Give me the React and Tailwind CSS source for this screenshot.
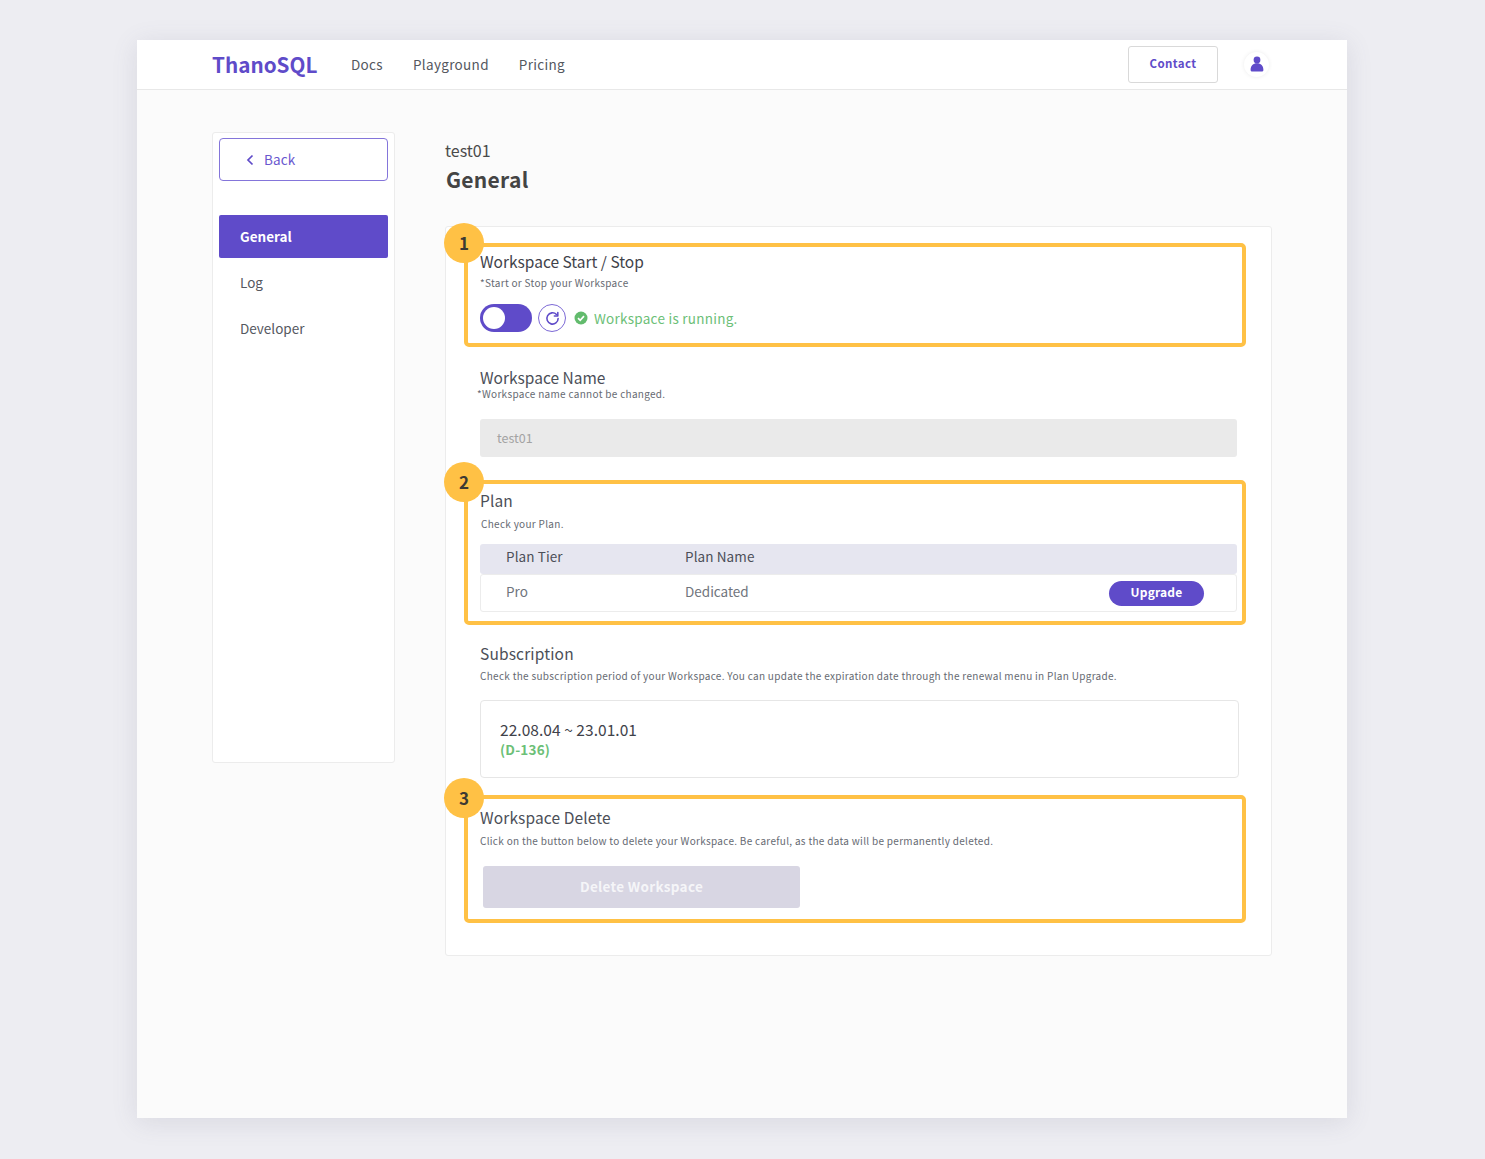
import React from "react";

const Badge = ({ n, top }) => (
  <div className={`absolute left-[-24px] ${top} w-[40px] h-[40px] rounded-full bg-[#ffc145] pb-[2px] flex items-center justify-center text-[17px] font-bold text-[#3d3a33] leading-none`}>
    {n}
  </div>
);

export default function App() {
  return (
    <div className="w-[1485px] h-[1159px] bg-[#ededf2] pt-[40px] pl-[137px] text-[#4c4f58] overflow-hidden" style={{ fontFamily: '"Noto Sans CJK KR", "Noto Sans", sans-serif' }}>
      <div className="w-[1210px] h-[1078px] bg-[#fbfbfb] shadow-[0_4px_24px_rgba(90,90,120,0.14)] flex flex-col">
        <header className="h-[50px] shrink-0 bg-white border-b border-[#e8e8e8] flex items-center pl-[75px] pr-[78px]">
          <div className="text-[20.7px] font-bold text-[#5f4bc9] leading-none w-[139px]">ThanoSQL</div>
          <nav className="flex gap-[30px] text-[13.5px] text-[#55585f] tracking-[0.32px] mb-[1px]">
            <span>Docs</span><span>Playground</span><span>Pricing</span>
          </nav>
          <div className="ml-auto flex items-center gap-[26px]">
            <button className="w-[90px] h-[37px] border border-[#d9d9d9] rounded-[3px] bg-white pb-[1px] text-[11.5px] font-bold text-[#5f4bc9] tracking-[0.4px]">Contact</button>
            <div className="w-[25px] h-[25px] rounded-full bg-white shadow-[0_0_4px_rgba(0,0,0,0.08)] flex items-center justify-center">
              <svg width="14" height="17" viewBox="0 0 14 17" fill="#5f4bc9"><circle cx="7" cy="4" r="3.4" /><path d="M.6 14c0-4.500 2.600-6.800 6.400-6.800s6.400 2.300 6.400 6.800c0 1-.8 1.500-1.800 1.500H2.400c-1 0-1.800-.5-1.800-1.500z" /></svg>
            </div>
          </div>
        </header>
        <div className="flex pl-[75px] pt-[42px]">
          <aside className="w-[183px] h-[631px] bg-white border border-[#ececec] rounded-[3px] px-[6px] pt-[5px] shrink-0">
            <button className="w-[169px] h-[43px] border border-[#8475da] rounded-[4px] bg-white flex items-center pl-[25px] text-[13.5px] text-[#6a58cf] tracking-[0.1px]">
              <svg width="10" height="12" viewBox="0 0 10 12" fill="none" stroke="#5f4bc9" strokeWidth="1.7" className="mr-[9px]"><path d="M7.500 1.500 3 6l4.500 4.500" /></svg>
              Back
            </button>
            <div className="mt-[34px] h-[43px] w-[169px] rounded-[2px] bg-[#5f4bc9] text-white font-bold text-[13.5px] flex items-center pl-[21px]">General</div>
            <div className="h-[46px] w-[169px] text-[13.5px] flex items-center pl-[21px] text-[#55585f] mt-[1px]">Log</div>
            <div className="h-[46px] w-[169px] text-[13.5px] flex items-center pl-[21px] text-[#55585f]">Developer</div>
          </aside>
          <main className="ml-[50px] w-[827px]">
            <div className="text-[16px] leading-[20px] mt-[8px] text-[#4a4a4a]">test01</div>
            <div className="text-[21px] leading-[28px] mt-[5px] ml-[1px] font-bold text-[#444444] tracking-[0.3px]">General</div>
            <div className="mt-[33px] h-[730px] bg-white border border-[#ececec] rounded-[3px] pt-[16px] pl-[18px] pr-[25px]">
              <section className="relative h-[104px] border-[4px] border-[#ffc145] rounded-[5px] pl-[12px] pt-[3px]">
                <Badge n="1" top="top-[-24px]" />
                <h2 className="text-[15.5px] leading-[22px] text-[#3f424a]">Workspace Start / Stop</h2>
                <p className="text-[10px] leading-[14px] mt-[4px] text-[#666a72] tracking-[0.3px]">*Start or Stop your Workspace</p>
                <div className="flex items-center mt-[14px]">
                  <div className="w-[52px] h-[28px] rounded-full bg-[#5f4bc9] flex items-center pl-[3px]"><div className="w-[22px] h-[22px] rounded-full bg-white" /></div>
                  <div className="ml-[6px] w-[28px] h-[28px] rounded-full border border-[#7c69d6] flex items-center justify-center">
                    <svg width="15" height="15" viewBox="0 0 24 24" fill="none" stroke="#5f4bc9" strokeWidth="2.500" strokeLinecap="round"><path d="M21 12a9 9 0 1 1-2.600-6.400" /><path d="M20.500 2.500v5.500H15" strokeLinejoin="round" /></svg>
                  </div>
                  <svg width="14" height="14" viewBox="0 0 14 14" className="ml-[8px]"><circle cx="7" cy="7" r="6.500" fill="#62bb6d" /><path d="M4 7.200 6.200 9.300 10 5.200" fill="none" stroke="#fff" strokeWidth="1.700" /></svg>
                  <span className="ml-[6px] text-[13.5px] text-[#6cc077] tracking-[0.26px]">Workspace is running.</span>
                </div>
              </section>
              <section className="pl-[16px] pt-[19px] h-[133px]">
                <h2 className="text-[15.5px] leading-[22px]">Workspace Name</h2>
                <p className="text-[10px] leading-[14px] ml-[-3px] text-[#666a72] tracking-[0.3px] mt-[-1px]">*Workspace name cannot be changed.</p>
                <div className="mt-[18px] w-[757px] h-[38px] bg-[#eaeaea] rounded-[3px] pl-[17px] flex items-center text-[12.5px] text-[#a3a3a3]">test01</div>
              </section>
              <section className="relative h-[145px] border-[4px] border-[#ffc145] rounded-[5px] pl-[12px] pt-[5px]">
                <Badge n="2" top="top-[-22px]" />
                <h2 className="text-[15.5px] leading-[22px] tracking-[0.1px]">Plan</h2>
                <p className="text-[10px] leading-[14px] mt-[6px] ml-[1px] text-[#666a72] tracking-[0.3px]">Check your Plan.</p>
                <div className="mt-[13px] w-[757px]">
                  <div className="h-[30px] bg-[#e6e6f0] rounded-[3px] flex items-center pb-[5px] pl-[26px] text-[13.5px] tracking-[0.1px]">
                    <span className="w-[179px]">Plan Tier</span><span>Plan Name</span>
                  </div>
                  <div className="h-[38px] bg-white border border-[#ececec] rounded-[3px] flex items-center pl-[25px] pr-[32px] text-[13.5px] text-[#70747c]">
                    <span className="w-[179px] mb-[4px]">Pro</span><span className="mb-[4px]">Dedicated</span>
                    <button className="ml-auto w-[95px] h-[25px] rounded-full bg-[#5f4bc9] pb-[2px] text-white text-[12px] font-bold tracking-[0.2px]">Upgrade</button>
                  </div>
                </div>
              </section>
              <section className="pl-[16px] pt-[17px] h-[170px]">
                <h2 className="text-[15.5px] leading-[22px] tracking-[0.15px]">Subscription</h2>
                <p className="text-[10px] leading-[14px] mt-[5px] text-[#666a72] tracking-[0.3px]">Check the subscription period of your Workspace. You can update the expiration date through the renewal menu in Plan Upgrade.</p>
                <div className="mt-[17px] w-[759px] h-[78px] border border-[#e6e6e6] rounded-[4px] pl-[19px] pt-[17px]">
                  <div className="text-[15.5px] leading-[22px] text-[#3f424a] tracking-[0.05px]">22.08.04 ~ 23.01.01</div>
                  <div className="text-[13.5px] leading-[18px] font-bold text-[#6cc077] tracking-[0.2px]">(D-136)</div>
                </div>
              </section>
              <section className="relative h-[128px] border-[4px] border-[#ffc145] rounded-[5px] pl-[12px] pt-[7px]">
                <Badge n="3" top="top-[-21px]" />
                <h2 className="text-[15.5px] leading-[22px] tracking-[0.12px]">Workspace Delete</h2>
                <p className="text-[10px] leading-[14px] mt-[6px] text-[#666a72] tracking-[0.3px]">Click on the button below to delete your Workspace. Be careful, as the data will be permanently deleted.</p>
                <button className="mt-[18px] ml-[3px] w-[317px] h-[42px] rounded-[3px] bg-[#d8d6e3] pb-[2px] text-[#f5f5f8] text-[13.5px] font-bold tracking-[0.3px]">Delete Workspace</button>
              </section>
            </div>
          </main>
        </div>
      </div>
    </div>
  );
}
